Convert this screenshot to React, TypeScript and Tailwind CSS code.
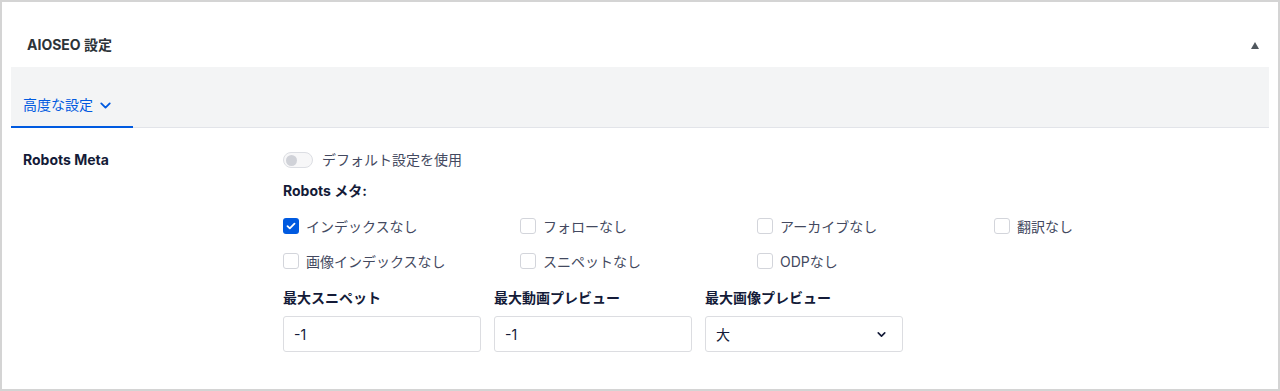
import { ChevronDown } from "lucide-react";

const font = { fontFamily: '"Inter", "Noto Sans CJK JP", sans-serif' };

const robots: { label: string; checked?: boolean }[] = [
  { label: "インデックスなし", checked: true },
  { label: "フォローなし" },
  { label: "アーカイブなし" },
  { label: "翻訳なし" },
  { label: "画像インデックスなし" },
  { label: "スニペットなし" },
  { label: "ODPなし" },
];

function Checkbox({ checked }: { checked?: boolean }) {
  if (checked) {
    return (
      <span className="flex h-4 w-4 items-center justify-center rounded-[3px] bg-[#005ae0]">
        <svg width="10" height="8" viewBox="0 0 10 8" fill="none">
          <path d="M1.5 4.2 3.8 6.4 8.5 1.6" stroke="white" strokeWidth="1.8" strokeLinecap="round" strokeLinejoin="round" />
        </svg>
      </span>
    );
  }
  return <span className="h-4 w-4 rounded-[3px] border border-[#d3d5db] bg-white" />;
}

function Field({ label, value, select }: { label: string; value: string; select?: boolean }) {
  return (
    <div className="w-[198px]">
      <div className="text-[14px] font-bold leading-5 text-[#141b38]">{label}</div>
      <div className="mt-[8px] flex h-[36px] items-center justify-between rounded-[3px] border border-[#dcdde1] bg-white pl-[10px] pr-[14px] text-[14px] text-[#141b38]">
        <span>{value}</span>
        {select && <ChevronDown size={13} strokeWidth={3} className="text-[#141b38]" />}
      </div>
    </div>
  );
}

export default function App() {
  return (
    <div className="h-[391px] w-full border-2 border-[#d4d4d4] bg-white" style={font}>
      <div className="flex items-center justify-between pb-[12px] pl-[25px] pr-[19px] pt-[33px]">
        <span className="text-[14px] font-bold leading-5 text-[#2c3338]">AIOSEO 設定</span>
        <svg width="8" height="7" viewBox="0 0 8 7">
          <path d="M4 0 8 7H0Z" fill="#50575e" />
        </svg>
      </div>

      <div className="mx-[9px] flex h-[61px] items-end border-b border-[#e2e4e9] bg-[#f3f4f5]">
        <div className="-mb-px flex items-center gap-[4px] border-b-2 border-[#005ae0] pb-[11px] pl-3 pr-[19px] text-[14px] leading-5 text-[#005ae0]">
          高度な設定
          <ChevronDown size={17} strokeWidth={2.6} />
        </div>
      </div>

      <div className="flex px-[21px] pt-[22px]">
        <div className="w-[260px] text-[14px] font-bold leading-5 text-[#141b38]">Robots Meta</div>
        <div>
          <div className="flex items-center gap-[9px]">
            <span className="flex h-4 w-[30px] items-center rounded-full border border-[#dcdee3] bg-[#f7f7f8] px-[2px]">
              <span className="h-[11px] w-[11px] rounded-full bg-[#d0d2d8]" />
            </span>
            <span className="text-[14px] leading-5 text-[#434960]">デフォルト設定を使用</span>
          </div>

          <div className="mt-[11px] text-[14px] font-bold leading-5 text-[#141b38]">Robots メタ:</div>

          <div className="mt-[15px] grid grid-cols-[237px_237px_237px_237px] gap-y-[15px]">
            {robots.map((r) => (
              <label key={r.label} className="flex h-5 items-center gap-[7px] text-[14px] text-[#434960]">
                <Checkbox checked={r.checked} />
                {r.label}
              </label>
            ))}
          </div>

          <div className="mt-[17px] flex gap-[13px]">
            <Field label="最大スニペット" value="-1" />
            <Field label="最大動画プレビュー" value="-1" />
            <Field label="最大画像プレビュー" value="大" select />
          </div>
        </div>
      </div>
    </div>
  );
}
